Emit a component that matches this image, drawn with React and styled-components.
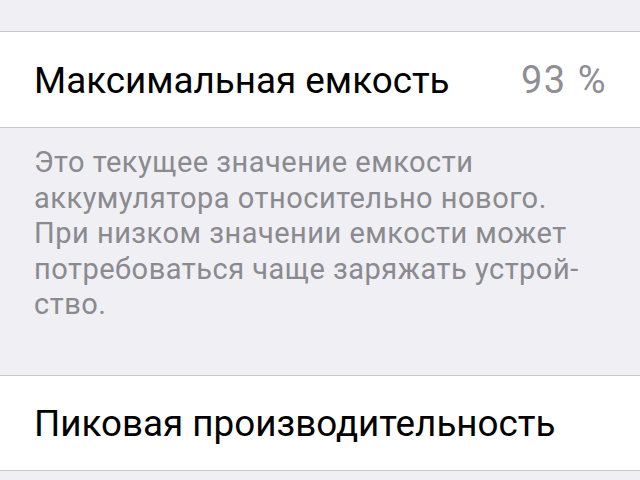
import React from 'react';
import styled, { createGlobalStyle } from 'styled-components';

const GlobalStyle = createGlobalStyle`
  html, body {
    margin: 0;
    padding: 0;
    background: #efeff4;
  }
  body {
    font-family: Roboto, "Noto Sans", sans-serif;
    -webkit-font-smoothing: antialiased;
  }
`;

const Screen = styled.div`
  width: 640px;
  height: 480px;
  overflow: hidden;
  background: #efeff4;
  padding-top: 31px;
  box-sizing: border-box;
`;

const Cell = styled.div`
  display: flex;
  align-items: center;
  justify-content: space-between;
  padding: 1px 33px 0 34px;
  background: #fff;
  border-top: 1px solid #c8c7cc;
  border-bottom: 1px solid #c8c7cc;
  box-sizing: border-box;
  height: ${({ $h }) => $h || 97}px;
`;

const Label = styled.span`
  font-size: 36.8px;
  color: #000;
`;

const Value = styled.span`
  font-size: 38px;
  letter-spacing: 1.5px;
  color: #8e8e93;
`;

const Footer = styled.div`
  padding: 17px 34px 0;
  height: 247px;
  box-sizing: border-box;
  font-size: 29px;
  letter-spacing: 0.5px;
  line-height: 35.5px;
  color: #8a8a8f;
`;

const lines = [
  'Это текущее значение емкости',
  'аккумулятора относительно нового.',
  'При низком значении емкости может',
  'потребоваться чаще заряжать устрой-',
  'ство.',
];

export default function App() {
  return (
    <Screen>
      <GlobalStyle />
      <Cell>
        <Label>Максимальная емкость</Label>
        <Value>93 %</Value>
      </Cell>
      <Footer>
        {lines.map(l => (
          <div key={l}>{l}</div>
        ))}
      </Footer>
      <Cell $h={96}>
        <Label>Пиковая производительность</Label>
      </Cell>
    </Screen>
  );
}
